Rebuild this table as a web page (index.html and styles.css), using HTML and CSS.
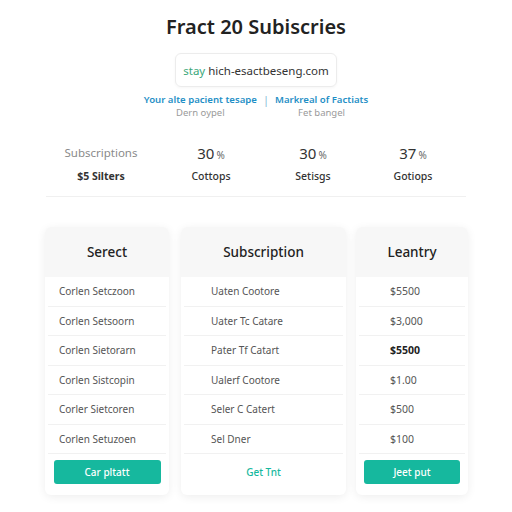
FILE: index.html
```html
<!DOCTYPE html>
<html>
<head>
<meta charset="utf-8">
<link rel="stylesheet" href="styles.css">
</head>
<body>
<div class="page">
  <h1 class="title">Fract 20 Subiscries</h1>
  <div class="search"><span class="green">stay</span> hich-esactbeseng.com</div>
  <div class="links">
    <div class="link-col">
      <a class="link">Your alte pacient tesape</a>
      <span class="sub">Dern oypel</span>
    </div>
    <span class="sep">|</span>
    <div class="link-col">
      <a class="link">Markreal of Factiats</a>
      <span class="sub">Fet bangel</span>
    </div>
  </div>
  <div class="stats">
    <div class="stat"><div class="s-top muted">Subscriptions</div><div class="s-bot bold">$5 Silters</div></div>
    <div class="stat"><div class="s-top big">30<small>%</small></div><div class="s-bot">Cottops</div></div>
    <div class="stat"><div class="s-top big">30<small>%</small></div><div class="s-bot">Setisgs</div></div>
    <div class="stat"><div class="s-top big">37<small>%</small></div><div class="s-bot">Gotiops</div></div>
  </div>
  <div class="cards">
    <div class="card c1">
      <div class="card-head">Serect</div>
      <div class="row">Corlen Setczoon</div>
      <div class="row">Corlen Setsoorn</div>
      <div class="row">Corlen Sietorarn</div>
      <div class="row">Corlen Sistcopin</div>
      <div class="row">Corler Sietcoren</div>
      <div class="row">Corlen Setuzoen</div>
      <div class="foot"><span class="btn">Car pltatt</span></div>
    </div>
    <div class="card c2">
      <div class="card-head">Subscription</div>
      <div class="row">Uaten Cootore</div>
      <div class="row">Uater Tc Catare</div>
      <div class="row">Pater Tf Catart</div>
      <div class="row">Ualerf Cootore</div>
      <div class="row">Seler C Catert</div>
      <div class="row">Sel Dner</div>
      <div class="foot"><span class="btn-text">Get Tnt</span></div>
    </div>
    <div class="card c3">
      <div class="card-head">Leantry</div>
      <div class="row">$5500</div>
      <div class="row">$3,000</div>
      <div class="row strong">$5500</div>
      <div class="row">$1.00</div>
      <div class="row">$500</div>
      <div class="row">$100</div>
      <div class="foot"><span class="btn">Jeet put</span></div>
    </div>
  </div>
</div>
</body>
</html>
```

FILE: styles.css
```css
* { box-sizing: border-box; }
html, body { margin: 0; padding: 0; background: #fff; }
body { font-family: "Noto Sans", "Liberation Sans", sans-serif; color: #2a2a2a; }
.page { width: 512px; height: 512px; overflow: hidden; display: flex; flex-direction: column; align-items: center; }
.title { margin: 15px 0 0; font-size: 20px; line-height: 24px; font-weight: 600; color: #222; }
.search { margin-top: 14px; width: 162px; height: 34px; border: 1px solid #ececec; border-radius: 6px; display: flex; align-items: center; justify-content: center; font-size: 11.5px; color: #333; box-shadow: 0 1px 3px rgba(0,0,0,0.04); white-space: nowrap; }
.green { color: #3aa77a; margin-right: 3px; }
.links { margin-top: 6px; display: flex; align-items: flex-start; gap: 6px; }
.link-col { display: flex; flex-direction: column; align-items: center; }
.link { font-size: 9.6px; line-height: 14px; font-weight: 600; color: #1f8fc6; white-space: nowrap; }
.sub { font-size: 9.5px; line-height: 12px; color: #9a9a9a; }
.sep { font-size: 11px; line-height: 14px; color: #8ab9d6; }
.stats { margin-top: 25px; width: 420px; display: grid; grid-template-columns: 110px 110px 94px 106px; padding-bottom: 13px; border-bottom: 1px solid #f0f0f0; }
.stat { display: flex; flex-direction: column; align-items: center; }
.s-top { height: 18px; line-height: 18px; font-size: 15px; color: #333; }
.s-top.muted { font-size: 11.5px; color: #8a8a8a; }
.s-top small { font-size: 10px; margin-left: 2px; color: #666; }
.s-bot { margin-top: 7px; font-size: 10.5px; line-height: 14px; color: #333; font-weight: 500; }
.s-bot.bold { font-weight: 700; }
.cards { margin-top: 30px; width: 512px; padding-left: 45px; display: flex; align-items: flex-start; }
.card { height: 268px; background: #fff; border-radius: 6px; box-shadow: 0 2px 10px rgba(0,0,0,0.07); overflow: hidden; display: flex; flex-direction: column; }
.c1 { width: 124px; margin-right: 12px; }
.c2 { width: 165px; margin-right: 10px; }
.c3 { width: 112px; }
.card-head { height: 50px; background: #f7f7f7; display: flex; align-items: center; justify-content: center; font-size: 13.5px; font-weight: 500; color: #222; }
.row { height: 29.5px; display: flex; align-items: center; font-size: 10px; color: #555; border-bottom: 1px solid #f1f1f1; margin: 0 3px; white-space: nowrap; }
.c1 .row { padding-left: 11px; }
.c2 .row { padding-left: 27px; }
.c3 .row { padding-left: 31px; font-size: 10.5px; }
.row.strong { font-weight: 700; color: #222; }
.foot { flex: 1; display: flex; align-items: flex-start; justify-content: center; padding-top: 6px; }
.btn { display: flex; align-items: center; justify-content: center; height: 24px; border-radius: 3px; background: #16b89e; color: #fff; font-size: 10px; font-weight: 500; }
.c1 .btn { width: 107px; }
.c3 .btn { width: 96px; }
.btn-text { height: 24px; line-height: 24px; font-size: 10px; color: #16b89e; font-weight: 500; }
```
